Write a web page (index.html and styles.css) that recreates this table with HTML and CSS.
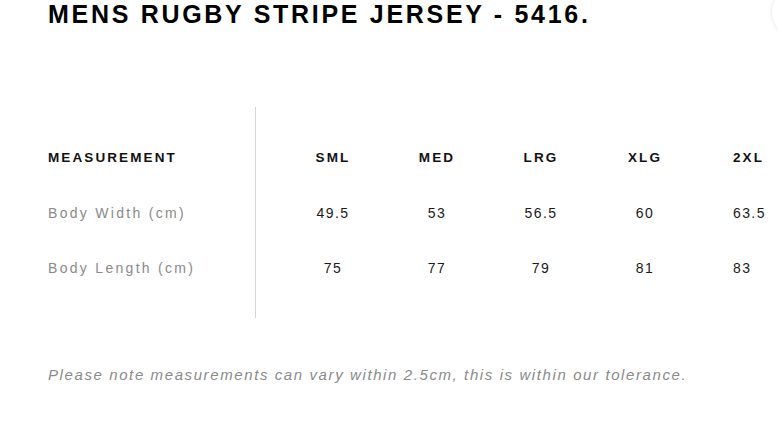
FILE: index.html
```html
<!DOCTYPE html>
<html lang="en">
<head>
  <meta charset="UTF-8">
  <title>Mens Rugby Stripe Jersey - Size Chart</title>
  <link rel="stylesheet" href="styles.css">
</head>
<body>

<div class="close-btn"></div>

<div class="size-guide">
  <h1>MENS RUGBY STRIPE JERSEY - 5416.</h1>

  <div class="chart">
    <div class="col labels">
      <div class="cell head">MEASUREMENT</div>
      <div class="cell label">Body Width (cm)</div>
      <div class="cell label">Body Length (cm)</div>
    </div>
    <div class="col size first">
      <div class="cell head">SML</div>
      <div class="cell">49.5</div>
      <div class="cell">75</div>
    </div>
    <div class="col size">
      <div class="cell head">MED</div>
      <div class="cell">53</div>
      <div class="cell">77</div>
    </div>
    <div class="col size">
      <div class="cell head">LRG</div>
      <div class="cell">56.5</div>
      <div class="cell">79</div>
    </div>
    <div class="col size">
      <div class="cell head">XLG</div>
      <div class="cell">60</div>
      <div class="cell">81</div>
    </div>
    <div class="col size last">
      <div class="cell head">2XL</div>
      <div class="cell">63.5</div>
      <div class="cell">83</div>
    </div>
  </div>

  <p class="note">Please note measurements can vary within 2.5cm, this is within our tolerance.</p>
</div>

</body>
</html>
```

FILE: styles.css
```css
body { margin: 0; background: #fff; font-family: "Liberation Sans", Arial, sans-serif; overflow: hidden; }
.close-btn { position: absolute; top: -14px; right: -46px; width: 52px; height: 52px; border-radius: 50%; background: #fff; box-shadow: 0 0 4px rgba(0,0,0,0.12); }
.size-guide { padding: 0 0 0 48px; }
h1 { margin: 0; font-size: 25px; line-height: 28px; font-weight: bold; letter-spacing: 2.7px; color: #000; white-space: nowrap; }
.chart { display: flex; margin-top: 79px; }
.col { flex-shrink: 0; display: flex; flex-direction: column; padding: 23px 0; }
.labels { width: 207px; border-right: 1px solid #d4d4d4; }
.size { width: 104px; align-items: center; }
.size.first { margin-left: 25px; }
.size.last { width: 80px; align-items: flex-start; padding-left: 36px; box-sizing: border-box; }
.cell { height: 55px; display: flex; align-items: center; font-size: 14px; letter-spacing: 1.4px; color: #1a1a1a; white-space: nowrap; }
.head { font-size: 13.5px; font-weight: bold; letter-spacing: 2.1px; color: #111; }
.label { color: #8a8a8a; letter-spacing: 2.3px; }
.note { margin: 48px 0 0; font-size: 15px; font-style: italic; letter-spacing: 1.6px; color: #8a8a8a; white-space: nowrap; }
```
